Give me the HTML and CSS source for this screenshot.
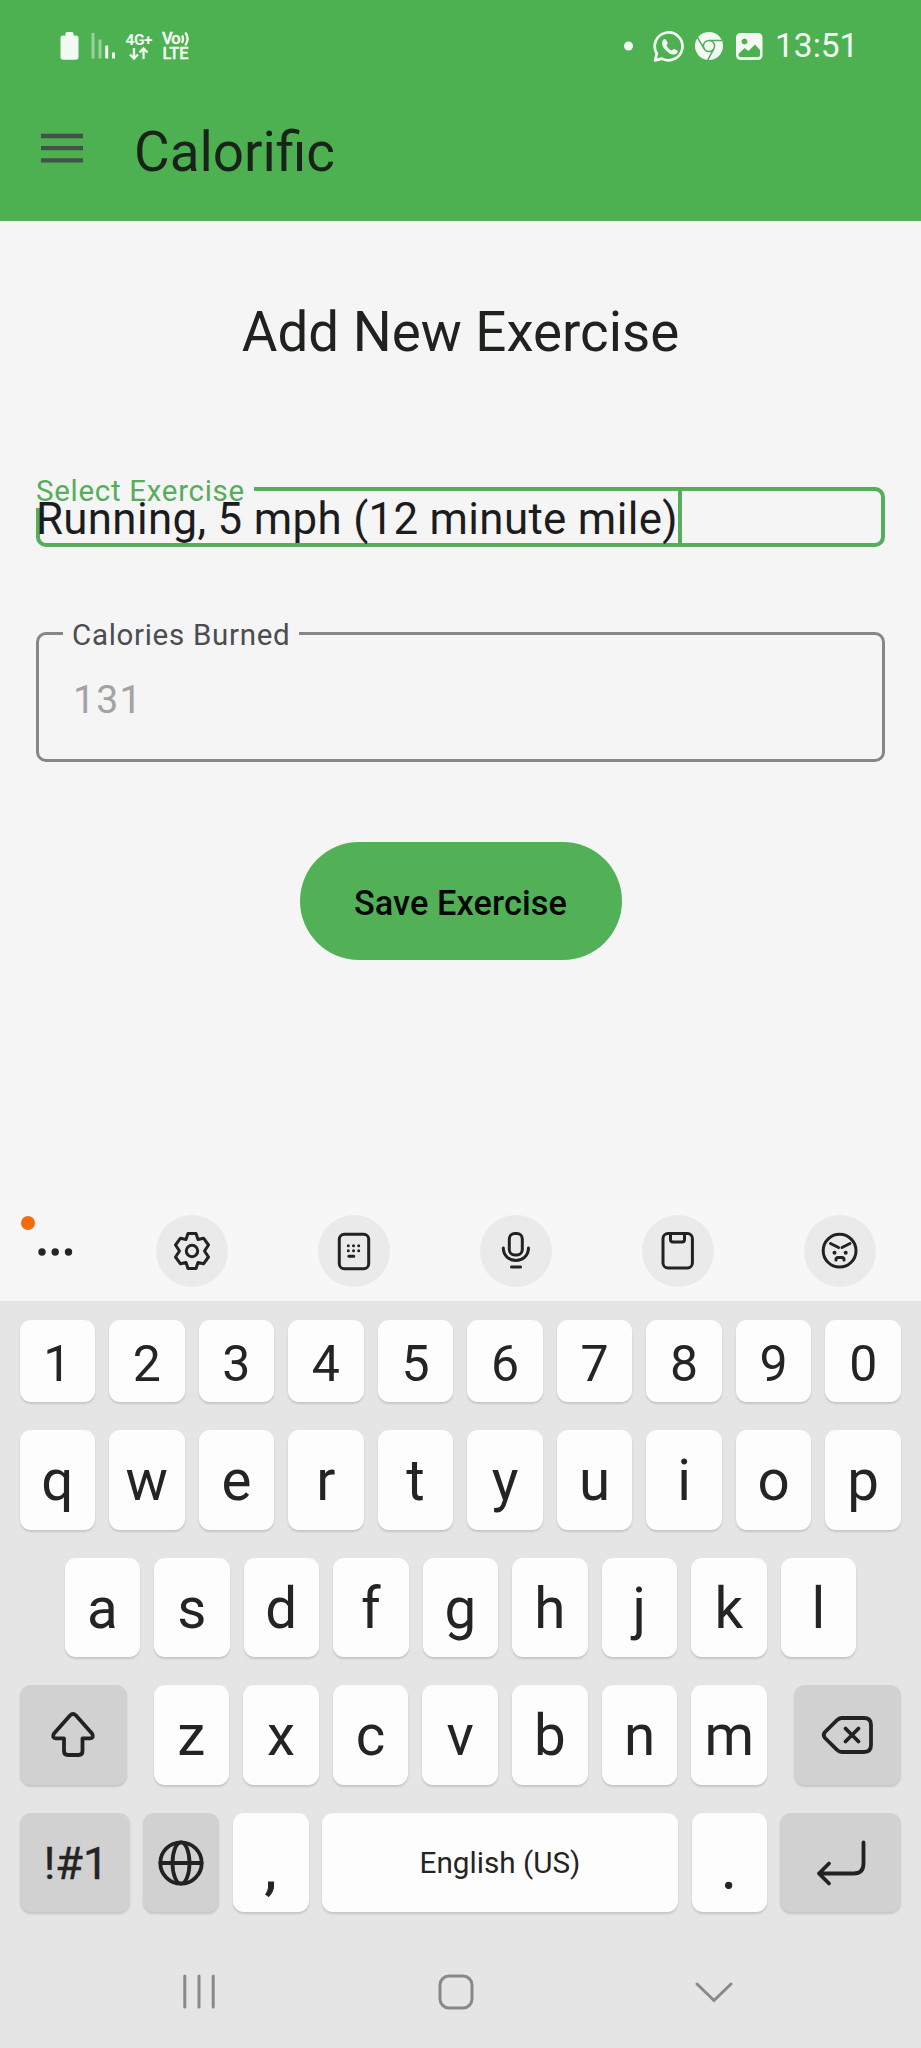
FILE: index.html
```html
<!DOCTYPE html>
<html lang="en">
<head>
<meta charset="utf-8">
<title>Calorific</title>
<link rel="stylesheet" href="styles.css">
</head>
<body>
<div class="screen">
  <header class="header">
    <div class="status">
      <svg class="status-left" width="160" height="40" viewBox="0 0 160 40" fill="none">
        <path d="M6.500 5.500q0-1.500 1.500-1.500h5q1.500 0 1.500 1.500v2h2.500q2.500 0 2.500 2.500v19q0 2.700-2.700 2.700h-12.600q-2.700 0-2.700-2.700v-19q0-2.500 2.500-2.500h2.500z" fill="#f3faf3"/>
        <path d="M34 5v25.500M41 11.500v19" stroke="#9bd19d" stroke-width="3"/>
        <path d="M47.700 17.500v13M54.500 24.500v6" stroke="#f3faf3" stroke-width="3"/>
        <g fill="#f3faf3" class="status-tiny">
          <text x="66.500" y="17" textLength="27">4G+</text>
          <text x="103" y="16" textLength="18.500" class="volte">Vo</text>
          <text x="103.500" y="31" textLength="26" lengthAdjust="spacingAndGlyphs" class="volte">LTE</text>
        </g>
        <path d="M75 20v10M71 26.500l4 4 4-4M84.500 31v-10M80.500 24.500l4-4 4 4" stroke="#f3faf3" stroke-width="2.300"/>
        <path d="M123 7.500q2 3 0 7.500M126.300 4.500q4.500 6 0 13" stroke="#f3faf3" stroke-width="2.300"/>
      </svg>
      <svg class="status-right" width="144" height="36" viewBox="0 0 144 36" fill="none">
        <circle cx="8.500" cy="18" r="4.500" fill="#f3faf3"/>
        <path d="M36.800 25.700A13.900 13.900 0 1 1 42 30.600L35.100 32.400z" stroke="#f3faf3" stroke-width="2.700" stroke-linejoin="round"/>
        <path d="M43.500 11.500q1.500-1 2.500 0.200l1.700 3.300q.2 1-1.300 2.400 2.200 4 5.400 5.200 1.200-1.800 2.300-1.700l3.600 1.900q.2 3.800-4.100 3.800-3.500 0-7.700-4.200t-3.900-7.700q.2-2.100 1.500-3.200z" fill="#f3faf3"/>
        <circle cx="89" cy="18" r="14" fill="#f3faf3"/>
        <circle cx="89" cy="18" r="5.600" stroke="#4db151" stroke-width="1.500"/>
        <path d="M89 12.400h13M84.200 20.800l-7-11.700M93.800 20.800l-6.200 11.500" stroke="#4db151" stroke-width="1.500"/>
        <path fill-rule="evenodd" d="M121 5h16.500q5 0 5 5v17q0 5-5 5h-16.500q-5 0-5-5v-17q0-5 5-5zM118.500 26v1q0 2 2 2h17.500q2 0 2-2v-5l-5-5.500-6.500 6.500-4-3zM124.500 10.500a3 3 0 1 0 .01 0z" fill="#f3faf3"/>
      </svg>
      <span class="clock">13:51</span>
    </div>
    <div class="appbar">
      <svg width="42" height="30" viewBox="0 0 42 30"><path d="M0 3h42M0 15.200h42M0 27.400h42" stroke="#42514a" stroke-width="4.300"/></svg>
      <h1 class="app-title">Calorific</h1>
    </div>
  </header>

  <main class="content">
    <h2 class="heading">Add New Exercise</h2>
    <div class="field field-active">
      <span class="label label-active">Select Exercise</span>
      <span class="value">Running, 5 mph (12 minute mile)</span><i class="caret"></i>
    </div>
    <div class="field field-idle">
      <span class="label label-idle">Calories Burned</span>
      <span class="amount">131</span>
    </div>
    <button class="save">Save Exercise</button>
  </main>

  <section class="toolbar">
    <div class="more">
      <i class="badge"></i>
      <svg width="36" height="10" viewBox="0 0 36 10" fill="#252525"><circle cx="5" cy="5" r="3.700"/><circle cx="18.200" cy="5" r="3.700"/><circle cx="31.500" cy="5" r="3.700"/></svg>
    </div>
    <div class="tool"><svg width="42" height="42" viewBox="-21 -21 42 42"><path d="M-4-17.500H4L6-11.500 11.500-12.800 16.500-6 12.500 0 16.500 6 11.500 12.800 6 11.500 4 17.500H-4L-6 11.500-11.500 12.800-16.500 6-12.500 0-16.500-6-11.500-12.800-6-11.500z"/><circle r="5.700"/></svg></div>
    <div class="tool"><svg width="42" height="42" viewBox="-21 -21 42 42"><rect x="-14.700" y="-16.700" width="29.400" height="34.400" rx="5"/><path class="keys-dots" d="M-5.700-5.200h.01M-.5-5.200h.01M4.700-5.200h.01M-5.700-.2h.01M-.5-.2h.01M4.700-.2h.01M-5.200 5.200h5"/></svg></div>
    <div class="tool"><svg width="42" height="42" viewBox="-21 -21 42 42"><rect x="-6.700" y="-17.500" width="13" height="21.500" rx="5.500"/><path d="M-12.700-3C-12.500 13.500 12.300 13.500 12.500-3M-4.500 16h9"/></svg></div>
    <div class="tool"><svg width="42" height="42" viewBox="-21 -21 42 42"><rect x="-15" y="-17.500" width="29.400" height="34.500" rx="5"/><path d="M-7.500-17v5.500q0 2.500 2.500 2.500h9q2.500 0 2.500-2.500v-5.500"/></svg></div>
    <div class="tool"><svg width="42" height="42" viewBox="-21 -21 42 42"><circle cx="-.4" cy="-.3" r="16.400"/><path d="M-9.500-7.500l8 4M10-7.500l-8 4M-4 9v-.5q0-2 2-2h4q2 0 2 2v.5"/><circle class="eye" cx="-5.500" cy="1.800" r="2"/><circle class="eye" cx="5.700" cy="1.800" r="2"/></svg></div>
  </section>

  <section class="keyboard">
    <div class="row digits"><b class="key">1</b><b class="key">2</b><b class="key">3</b><b class="key">4</b><b class="key">5</b><b class="key">6</b><b class="key">7</b><b class="key">8</b><b class="key">9</b><b class="key">0</b></div>
    <div class="row"><b class="key">q</b><b class="key">w</b><b class="key">e</b><b class="key">r</b><b class="key">t</b><b class="key">y</b><b class="key">u</b><b class="key">i</b><b class="key">o</b><b class="key">p</b></div>
    <div class="row row-home"><b class="key">a</b><b class="key">s</b><b class="key">d</b><b class="key">f</b><b class="key">g</b><b class="key">h</b><b class="key">j</b><b class="key">k</b><b class="key">l</b></div>
    <div class="row row-shift">
      <b class="key dark"><svg width="46" height="48" viewBox="0 0 46 48"><path d="M20 4.500q3-3 6 0L42 22.500q2.500 4.500-2 4.800H32.500V40q0 4-4 4H18q-4 0-4-4V27.300H6q-4.500-.3-2-4.800z"/></svg></b>
      <div class="letters"><b class="key">z</b><b class="key">x</b><b class="key">c</b><b class="key">v</b><b class="key">b</b><b class="key">n</b><b class="key">m</b></div>
      <b class="key dark"><svg width="52" height="40" viewBox="0 0 52 40"><path d="M19.500 3H42q7 0 7 7v20q0 7-7 7H19.500q-2.500 0-4.500-2.200L3 23q-2.500-3 0-6L15 5.200Q17 3 19.500 3zM23.500 13.500l13 13M36.500 13.500l-13 13"/></svg></b>
    </div>
    <div class="row row-bottom">
      <b class="key dark symbols">!#1</b>
      <b class="key dark"><svg width="46" height="46" viewBox="0 0 46 46"><circle cx="23" cy="23" r="20.700"/><ellipse cx="23" cy="23" rx="8.500" ry="20.700"/><path d="M2.500 23h41"/></svg></b>
      <b class="key punct">,</b>
      <b class="key space">English (US)</b>
      <b class="key punct">.</b>
      <b class="key dark"><svg width="50" height="46" viewBox="0 0 50 46"><path d="M47.500 2.500v21q0 10-10 10H3M13 23.500l-10 10 10 10"/></svg></b>
    </div>
  </section>

  <nav class="navbar">
    <svg width="34" height="36" viewBox="0 0 34 36"><path d="M2.800 2v31M17 2v31M31.200 2v31"/></svg>
    <svg width="36" height="36" viewBox="0 0 36 36"><rect x="2" y="2" width="32" height="32" rx="9"/></svg>
    <svg width="38" height="24" viewBox="0 0 38 24"><path d="M2 3l17 16.500L36 3"/></svg>
  </nav>
</div>
</body>
</html>
```
FILE: styles.css
```css
* { box-sizing: border-box; }
body { margin: 0; font-family: Roboto, sans-serif; color: #202220; background: #f5f5f5; }
.screen { width: 921px; height: 2048px; display: flex; flex-direction: column; overflow: hidden; }
svg { display: block; flex: none; overflow: visible; }

.header { height: 221px; background: #4db151; flex: none; }
.status { display: flex; height: 92px; padding: 28px 66px 0 59px; align-items: flex-start; }
.status-tiny { font-size: 15.500px; font-weight: 700; }
.volte { font-size: 16.500px; font-weight: 500; stroke: #f3faf3; stroke-width: .4px; }
.status-right { margin-left: auto; }
.clock { font-size: 33.500px; line-height: 36px; color: #f3faf3; margin-left: 11px; width: 80px; white-space: nowrap; }
.appbar { display: flex; padding: 27px 0 0 41px; align-items: flex-start; }
.appbar svg { margin-top: 14px; }
.app-title { margin: 1px 0 0 51px; font-size: 54.800px; line-height: 64px; font-weight: 400; color: #18231a; }

.content { height: 979px; flex: none; padding: 79px 36px 0; display: flex; flex-direction: column; background: #f5f5f5; }
.heading { margin: 0; font-size: 54.700px; line-height: 64px; font-weight: 400; text-align: center; }
.field { position: relative; border-radius: 10px; }
.field-active { height: 60px; margin-top: 123px; border: 4px solid #56ad5b; display: flex; }
.label { position: absolute; font-size: 29.500px; line-height: 34px; letter-spacing: .7px; background: #f5f5f5; white-space: nowrap; }
.label-active { left: -4px; top: -17px; padding-right: 9px; color: #56ad5b; }
.value { position: relative; font-size: 43.800px; line-height: 52px; letter-spacing: .35px; margin: 2px 0 0 -4px; color: #1c1c1e; white-space: nowrap; }
.caret { width: 4px; background: #56ad5b; }
.field-idle { height: 130px; margin-top: 85px; border: 3px solid #85858a; padding: 42px 0 0 34px; }
.label-idle { left: 24px; top: -17px; padding: 0 9px; color: #4c4c52; }
.amount { display: block; font-size: 39.200px; line-height: 46px; letter-spacing: 1.200px; color: #a3a3a3; }
.save { margin: 80px auto 0; width: 322px; height: 118px; border: 0; border-radius: 59px; padding: 4px 0 0; background: #52b157; color: #040804; font: 500 34.300px Roboto, sans-serif; letter-spacing: .1px; }

.toolbar { height: 101px; flex: none; background: #f7f7f7; display: flex; padding: 15px 45px 0 37px; gap: 90px; }
.more { position: relative; width: 36px; padding-top: 32px; margin-right: -7px; }
.badge { position: absolute; left: -16px; top: 1px; width: 14px; height: 14px; border-radius: 50%; background: #f56b0f; }
.tool { width: 72px; height: 72px; border-radius: 50%; background: #eaeaea; display: grid; place-items: center; flex: none; }
.tool svg { fill: none; stroke: #222; stroke-width: 3px; stroke-linecap: round; stroke-linejoin: round; }
.tool .eye { fill: #222; stroke: none; }
.tool .keys-dots { stroke-width: 3px; }

.keyboard { background: #e5e5e5; height: 627px; flex: none; padding: 19px 20px 0 19.500px; display: flex; flex-direction: column; gap: 28px; }
.row { height: 99.600px; display: grid; grid-template-columns: repeat(10, 1fr); column-gap: 14px; flex: none; }
.digits { height: 82px; }
.digits .key { font-size: 50px; padding-top: 5px; }
.row-home { grid-template-columns: repeat(9, 1fr); padding: 0 45px; }
.row-shift { grid-template-columns: 107px 1fr 107px; column-gap: 27px; }
.letters { display: grid; grid-template-columns: repeat(7, 1fr); column-gap: 14px; }
.row-bottom { grid-template-columns: 110px 76px 76px 356px 75px 121px; column-gap: 0; justify-content: space-between; }
.key { background: #fdfdfd; border-radius: 11px; box-shadow: 0 2px 2px #c6c6c6; display: flex; align-items: center; justify-content: center; font-weight: 400; font-size: 56.500px; line-height: 1; color: #242424; padding-top: 3px; }
.dark { background: #d1d1d1; padding-top: 0; }
.dark svg { fill: none; stroke: #222; stroke-width: 3.800px; stroke-linecap: round; stroke-linejoin: round; }
.symbols { font-size: 45px; padding: 2px 0 0 3px; -webkit-text-stroke: .4px #242424; }
.space { font-size: 29.700px; padding-top: 1px; }
.punct { padding-top: 13px; -webkit-text-stroke: 1px #242424; }

.navbar { background: #e5e5e5; flex: 1; padding: 46px 188px 0 182px; display: flex; justify-content: space-between; align-items: flex-start; }
.navbar svg { fill: none; stroke: #898989; stroke-width: 3px; stroke-linecap: round; }
.navbar svg:last-child { margin-top: 7px; }
```
